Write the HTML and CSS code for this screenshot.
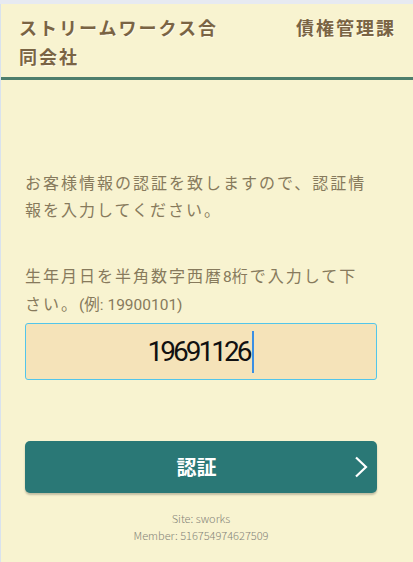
FILE: index.html
```html
<!DOCTYPE html>
<html lang="ja">
<head>
<meta charset="utf-8">
<title>認証</title>
<link rel="stylesheet" href="styles.css">
</head>
<body>
<div class="page">
  <header class="header">
    <div class="title-left">ストリームワークス合同会社</div>
    <div class="title-right">債権管理課</div>
  </header>
  <main class="main">
    <p class="msg">お客様情報の認証を致しますので、認証情報を入力してください。</p>
    <p class="msg msg-2">生年月日を半角数字西暦<span class="latin">8</span>桁で入力して下さい。<span class="latin">(例: 19900101)</span></p>
    <div class="field"><span class="value">19691126</span><span class="caret"></span></div>
    <button class="btn" type="button">
      <span></span>
      <span class="btn-label">認証</span>
      <svg class="chev" width="14" height="22" viewBox="0 0 14 22"><polyline points="2,1.5 12,11 2,20.5" fill="none" stroke="#ffffff" stroke-width="2.2"/></svg>
    </button>
    <div class="foot">
      <div>Site: sworks</div>
      <div>Member: 516754974627509</div>
    </div>
  </main>
</div>
</body>
</html>
```
FILE: styles.css
```css
html, body {
  margin: 0;
  padding: 0;
}
body {
  background: #e7eaf1;
  font-family: Roboto, "Noto Sans CJK JP", sans-serif;
}
.page {
  margin-top: 4px;
  min-height: 558px;
  background: #f8f3d0;
  border-left: 1px solid #d9e2ee;
}
.header {
  display: flex;
  align-items: flex-start;
  justify-content: space-between;
  padding: 9px 17px 6px 18px;
  border-bottom: 3px solid #4e7e6c;
  font-family: "Noto Sans CJK JP", sans-serif;
  font-weight: bold;
  font-size: 18px;
  letter-spacing: 2px;
  line-height: 29px;
  color: #7a6444;
  text-shadow: 1px 1px 0 #fffbe6;
}
.title-left {
  width: 210px;
}
.title-right {
  white-space: nowrap;
}
.main {
  padding: 90px 36px 0 24px;
}
.msg {
  margin: 0 5px 0 0;
  font-size: 16px;
  letter-spacing: 2px;
  line-height: 27px;
  color: #877a5c;
}
.msg-2 {
  margin-top: 39px;
}
.latin {
  font-family: Roboto, "Noto Sans CJK JP", sans-serif;
  font-size: 15.5px;
  line-height: 27px;
  letter-spacing: 0;
}
.field {
  margin-top: 4px;
  height: 55px;
  display: flex;
  align-items: center;
  justify-content: center;
  background: #f5e3b9;
  border: 1px solid #52c5ea;
  border-radius: 3px;
}
.value {
  font-family: Roboto, sans-serif;
  font-size: 28px;
  letter-spacing: -3px;
  color: #111111;
}
.caret {
  display: inline-block;
  width: 2px;
  height: 42px;
  margin-left: 3px;
  background: #3b8fe3;
}
.btn {
  margin-top: 61px;
  width: 100%;
  height: 52px;
  display: grid;
  grid-template-columns: 1fr auto 1fr;
  align-items: center;
  padding: 0 9px 0 0;
  border: none;
  border-radius: 5px;
  background: #2a7876;
  box-shadow: 0 2px 2px rgba(0, 0, 0, 0.22);
  color: #ffffff;
  font-family: "Noto Sans CJK JP", sans-serif;
  font-weight: bold;
  font-size: 20px;
}
.btn-label {
  line-height: 24px;
}
.chev {
  justify-self: end;
  display: block;
}
.foot {
  margin-top: 17px;
  text-align: center;
  font-family: "Noto Sans CJK JP", sans-serif;
  font-weight: 300;
  font-size: 11px;
  line-height: 17px;
  color: #858479;
}
```
